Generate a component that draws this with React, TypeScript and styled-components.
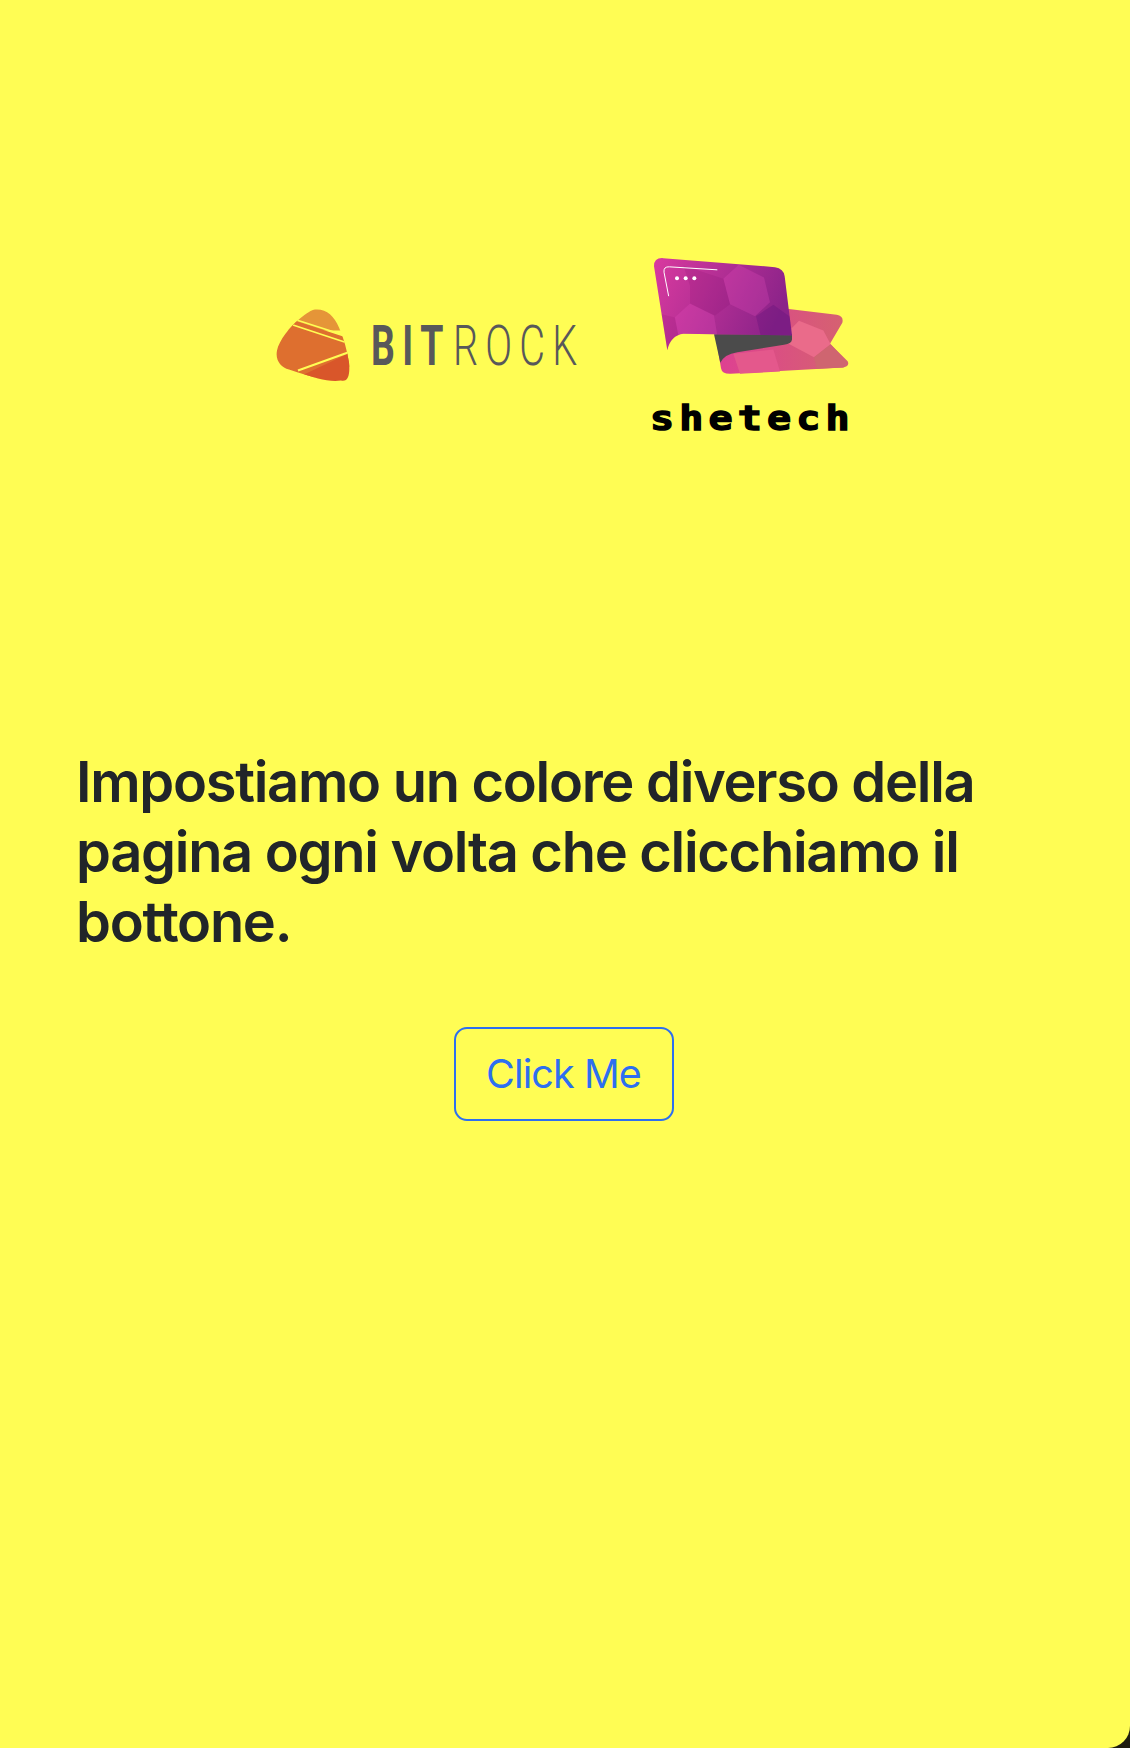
import React from 'react';
import styled, { createGlobalStyle } from 'styled-components';

const GlobalStyle = createGlobalStyle`
  html, body {
    margin: 0;
    padding: 0;
    background: #1f1d10;
  }
`;

const Page = styled.div`
  box-sizing: border-box;
  width: 1130px;
  height: 1748px;
  padding: 257px 76px 0;
  background: #fffd54;
  border-bottom-right-radius: 22px;
  font-family: Inter, "Liberation Sans", sans-serif;
  color: #212529;
  overflow: hidden;
`;

const LogoRow = styled.div`
  display: flex;
  justify-content: center;
  align-items: center;
  gap: 74px;
  margin-left: -76px;
  margin-right: -76px;
`;

const BitrockMark = styled.svg`
  display: block;
  flex: none;
  width: 304px;
  height: 80px;
  overflow: visible;
`;

const ShetechMark = styled.svg`
  display: block;
  flex: none;
  width: 208px;
  height: 177px;
  overflow: visible;
`;

const Heading = styled.h2`
  margin: 313px 0 0;
  font-size: 56px;
  line-height: 70.2px;
  font-weight: 600;
  letter-spacing: -1.3px;
`;

const ButtonRow = styled.div`
  display: flex;
  justify-content: center;
  margin-top: 69px;
  padding-right: 3px;
`;

const OutlineButton = styled.button`
  box-sizing: border-box;
  width: 220px;
  height: 94px;
  padding: 0;
  background: transparent;
  border: 2px solid #2d6ff0;
  border-radius: 13px;
  font-family: inherit;
  font-size: 39.5px;
  font-weight: 400;
  letter-spacing: -0.9px;
  color: #2d6ff0;
`;

const BitrockLogo = () => (
  <BitrockMark viewBox="272 305.5 304 80">
    <defs>
      <clipPath id="stone">
        <path d="M277 350 C279 340 290 326 300 318 C306 313 312 309 315 309 C326 308 334 315 339 327 C344 338 347 350 349 362 C350 372 349 382 341 380 C334 381 326 380 318 378 L298 372 L289 369 C281 367 275 360 277 350 Z" />
      </clipPath>
    </defs>
    <g clipPath="url(#stone)">
      <rect x="270" y="305" width="85" height="25" fill="#e59538" />
      <polygon points="270,312 355,340 355,365 270,390" fill="#de6f2f" />
      <polygon points="270,390 355,350 355,390" fill="#d9562a" />
      <path d="M295 319 L345 335" stroke="#fffd54" strokeWidth="1.8" />
      <path d="M293 324.5 L346 342" stroke="#fffd54" strokeWidth="1.8" />
      <path d="M298 370 L348 352" stroke="#fffd54" strokeWidth="2.2" />
    </g>
    <text transform="translate(371 364) scale(0.68 1)" fontFamily="Roboto, sans-serif" fontWeight="700" fontSize="55" letterSpacing="11" fill="#58585a">BIT</text>
    <text transform="translate(453 364) scale(0.72 1)" fontFamily="Roboto, sans-serif" fontWeight="300" fontSize="55" letterSpacing="10" fill="#58585a">ROCK</text>
  </BitrockMark>
);

const ShetechLogo = () => (
  <ShetechMark viewBox="30 35 624 530">
    <defs>
      <linearGradient id="front" x1="0" y1="0" x2="1" y2="0.3">
        <stop offset="0" stopColor="#d93a9f" />
        <stop offset="1" stopColor="#8b2389" />
      </linearGradient>
      <linearGradient id="back" x1="0" y1="0" x2="1" y2="0">
        <stop offset="0" stopColor="#de3f93" />
        <stop offset="1" stopColor="#d5636f" />
      </linearGradient>
      <clipPath id="frontClip">
        <path d="M42 62 Q42 36 70 38 L405 65 Q431 69 434 92 L456 270 L222 266 L130 265 Q92 270 82 314 Z" />
      </clipPath>
    </defs>
    <path d="M440 190 L590 208 Q612 212 607 232 L570 295 L623 347 Q630 362 610 366 L272 385 Q246 386 243 368 L225 262 Z" fill="url(#back)" />
    <polygon points="455,248 477,226 550,255 572,296 522,335 440,292" fill="#ea6b8a" />
    <polygon points="280,325 400,312 420,378 300,385" fill="#e4588c" />
    <polygon points="522,335 572,296 622,350 610,366 530,370" fill="#cf6570" />
    <path d="M222 266 L456 266 L456 282 Q455 295 432 298 L292 320 Q252 326 241 352 Z" fill="#4b4b4b" />
    <path d="M42 62 Q42 36 70 38 L405 65 Q431 69 434 92 L456 270 L222 266 L130 265 Q92 270 82 314 Z" fill="url(#front)" />
    <g clipPath="url(#frontClip)">
      <polygon points="250,100 296,58 372,96 390,170 345,212 270,176" fill="#e64fc0" opacity="0.25" />
      <polygon points="104,216 150,174 222,210 232,270 115,270" fill="#e64fc0" opacity="0.25" />
      <polygon points="348,212 400,178 452,215 460,270 362,270" fill="#4a0a70" opacity="0.22" />
      <polygon points="130,60 250,100 270,176 225,210 150,174 150,120" fill="#7a0a60" opacity="0.14" />
      <polygon points="30,190 70,208 105,216 115,270 82,320" fill="#7a0a60" opacity="0.12" />
    </g>
    <path d="M232 73 L88 64 Q70 63 72 80 L86 152" fill="none" stroke="#ffffff" strokeWidth="3" />
    <circle cx="111" cy="98" r="6" fill="#ffffff" />
    <circle cx="137" cy="98" r="6" fill="#ffffff" />
    <circle cx="163" cy="98" r="6" fill="#ffffff" />
    <text transform="translate(30 553) scale(1.2 1)" fontFamily="DejaVu Sans Mono, monospace" fontWeight="700" fontSize="100" letterSpacing="13" fill="#000000" stroke="#000000" strokeWidth="4">shetech</text>
  </ShetechMark>
);

export default function App() {
  return (
    <Page>
      <GlobalStyle />
      <LogoRow>
        <BitrockLogo />
        <ShetechLogo />
      </LogoRow>
      <Heading>Impostiamo un colore diverso della pagina ogni volta che clicchiamo il bottone.</Heading>
      <ButtonRow>
        <OutlineButton>Click Me</OutlineButton>
      </ButtonRow>
    </Page>
  );
}
